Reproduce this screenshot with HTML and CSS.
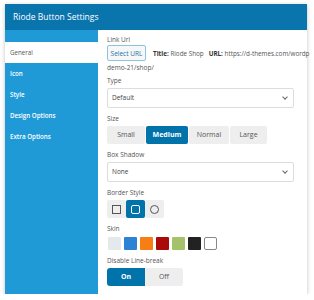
FILE: index.html
```html
<!DOCTYPE html>
<html lang="en">
<head>
    <meta charset="UTF-8">
    <title>Riode Button Settings</title>
    <link rel="stylesheet" href="styles.css">
</head>
<body>
    <div class="panel">
        <div class="panel-head">Riode Button Settings</div>
        <div class="panel-body">
            <ul class="side-nav">
                <li class="active">General</li>
                <li>Icon</li>
                <li>Style</li>
                <li>Design Options</li>
                <li>Extra Options</li>
            </ul>
            <div class="content">
                <div class="field field-url">
                    <div class="label">Link Url</div>
                    <div class="url-row">
                        <button class="btn-url">Select URL</button>
                        <span class="url-meta"><b>Title:</b> Riode Shop</span>
                        <span class="url-meta url-link"><b>URL:</b> https://d-themes.com/wordp</span>
                    </div>
                    <div class="url-rest">demo-21/shop/</div>
                </div>
                <div class="field">
                    <div class="label">Type</div>
                    <div class="select">Default <span class="chev"></span></div>
                </div>
                <div class="field">
                    <div class="label">Size</div>
                    <div class="btn-group">
                        <span class="opt">Small</span>
                        <span class="opt on">Medium</span>
                        <span class="opt">Normal</span>
                        <span class="opt">Large</span>
                    </div>
                </div>
                <div class="field">
                    <div class="label">Box Shadow</div>
                    <div class="select">None <span class="chev"></span></div>
                </div>
                <div class="field">
                    <div class="label">Border Style</div>
                    <div class="btn-group icons">
                        <span class="opt"><i class="shape sq"></i></span>
                        <span class="opt on"><i class="shape rd"></i></span>
                        <span class="opt"><i class="shape ci"></i></span>
                    </div>
                </div>
                <div class="field">
                    <div class="label">Skin</div>
                    <div class="skins">
                        <span class="sw" style="background:#e4e9ed"></span>
                        <span class="sw" style="background:#2d82d6"></span>
                        <span class="sw" style="background:#f77e14"></span>
                        <span class="sw" style="background:#aa0a0a"></span>
                        <span class="sw" style="background:#a5c26b"></span>
                        <span class="sw" style="background:#222222"></span>
                        <span class="sw white"></span>
                    </div>
                </div>
                <div class="field">
                    <div class="label">Disable Line-break</div>
                    <div class="toggle">
                        <span class="opt on">On</span>
                        <span class="opt">Off</span>
                    </div>
                </div>
            </div>
        </div>
    </div>
</body>
</html>
```

FILE: styles.css
```css
body {
    margin: 0;
    background: #fff;
    font-family: 'Open Sans', 'Noto Sans', sans-serif;
}
.panel {
    width: 302px;
    height: 290px;
    margin: 4px 0 0 5px;
    box-shadow: 0 1px 4px rgba(0,0,0,0.25);
    display: flex;
    flex-direction: column;
}
.panel-head {
    height: 26px;
    background: #0a74ad;
    color: #fff;
    font-size: 8.5px;
    line-height: 26px;
    padding-left: 8px;
    flex-shrink: 0;
}
.panel-body {
    flex: 1;
    display: flex;
    min-height: 0;
}
.side-nav {
    width: 93px;
    flex-shrink: 0;
    margin: 0;
    padding: 12px 0 0 0;
    list-style: none;
    background: #1f9ad7;
}
.side-nav li {
    height: 21px;
    line-height: 21px;
    padding-left: 5px;
    font-size: 6.2px;
    font-weight: 600;
    color: #fff;
}
.side-nav li.active {
    background: #fff;
    color: #555;
    font-weight: 400;
}
.content {
    flex: 1;
    min-width: 0;
    padding: 5px 0 0 9px;
    background: #fff;
}
.field {
    margin-bottom: 6px;
}
.field-url {
    margin-bottom: 2px;
}
.label {
    font-size: 6.5px;
    color: #555;
    line-height: 10px;
    margin-bottom: 2px;
}
.field-url .label {
    margin-bottom: 0;
}
.url-row {
    display: flex;
    align-items: center;
    white-space: nowrap;
    gap: 7px;
}
.btn-url {
    width: 39px;
    height: 16px;
    padding: 0;
    border: 1px solid #8ec2e0;
    border-radius: 2px;
    background: #f6f7f7;
    color: #2271b1;
    font-family: inherit;
    font-size: 6.5px;
    flex-shrink: 0;
}
.url-meta {
    font-size: 6.3px;
    color: #555;
}
.url-meta b {
    color: #333;
    font-weight: 700;
}
.url-link {
    margin-left: -2px;
}
.url-rest {
    font-size: 6.5px;
    color: #555;
    margin-top: 1px;
    line-height: 12px;
}
.select {
    width: 187px;
    height: 20px;
    box-sizing: border-box;
    border: 1px solid #ddd;
    border-radius: 2px;
    font-size: 6.5px;
    color: #444;
    line-height: 18px;
    padding-left: 4px;
    position: relative;
}
.chev {
    position: absolute;
    right: 6px;
    top: 6px;
    width: 3px;
    height: 3px;
    border-right: 1px solid #666;
    border-bottom: 1px solid #666;
    transform: rotate(45deg);
}
.btn-group {
    display: flex;
    gap: 1px;
}
.opt {
    background: #eee;
    color: #555;
    font-size: 7px;
    text-align: center;
    height: 18px;
    line-height: 18px;
    border-radius: 2px;
}
.opt.on {
    background: #0073aa;
    color: #fff;
    font-weight: 700;
}
.btn-group .opt {
    width: 38px;
}
.btn-group .opt:nth-child(2) { width: 42px; }
.btn-group .opt:nth-child(3) { width: 40px; }
.btn-group .opt:nth-child(4) { width: 37px; }
.btn-group.icons {
    gap: 0;
}
.btn-group.icons .opt {
    width: 19px;
    display: flex;
    align-items: center;
    justify-content: center;
}
.shape {
    width: 7px;
    height: 7px;
    border: 1px solid #555;
}
.shape.rd { border-radius: 2px; }
.shape.ci { border-radius: 50%; }
.opt.on .shape { border-color: #fff; }
.skins {
    display: flex;
    gap: 3px;
    padding: 1px 0 0 1px;
}
.sw {
    width: 13px;
    height: 13px;
    border-radius: 1px;
}
.sw.white {
    box-sizing: border-box;
    background: #fff;
    border: 1px solid #888;
    border-radius: 2px;
}
.toggle {
    display: flex;
}
.toggle .opt {
    width: 38px;
}
.toggle .opt.on { border-radius: 3px 0 0 3px; }
.toggle .opt:last-child { border-radius: 0 3px 3px 0; }
```
